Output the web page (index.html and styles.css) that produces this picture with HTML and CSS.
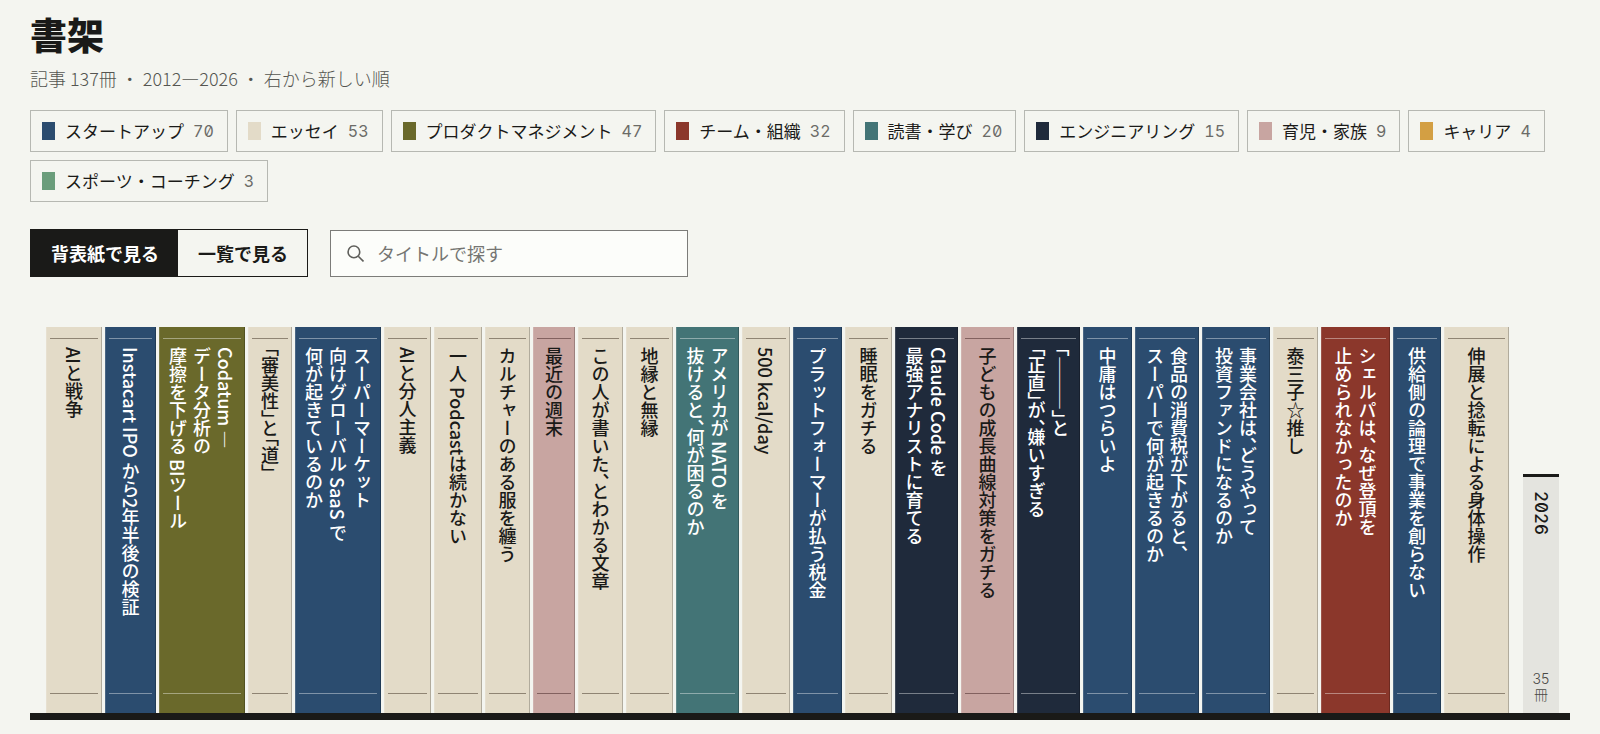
FILE: index.html
```html
<!DOCTYPE html>
<html lang="ja">
<head>
<meta charset="utf-8">
<meta name="viewport" content="width=device-width, initial-scale=1">
<title>書架</title>
<link rel="stylesheet" href="styles.css">
</head>
<body>
<main class="page">
  <header class="head">
    <h1 class="title">書架</h1>
    <p class="summary">記事 137冊 ・ 2012—2026 ・ 右から新しい順</p>
  </header>

  <div class="filters">
    <button type="button" class="chip startup"><i class="swatch"></i><span class="name">スタートアップ</span><span class="count">70</span></button>
    <button type="button" class="chip essay"><i class="swatch"></i><span class="name">エッセイ</span><span class="count">53</span></button>
    <button type="button" class="chip product"><i class="swatch"></i><span class="name">プロダクトマネジメント</span><span class="count">47</span></button>
    <button type="button" class="chip team"><i class="swatch"></i><span class="name">チーム・組織</span><span class="count">32</span></button>
    <button type="button" class="chip reading"><i class="swatch"></i><span class="name">読書・学び</span><span class="count">20</span></button>
    <button type="button" class="chip engineering"><i class="swatch"></i><span class="name">エンジニアリング</span><span class="count">15</span></button>
    <button type="button" class="chip family"><i class="swatch"></i><span class="name">育児・家族</span><span class="count">9</span></button>
    <button type="button" class="chip career"><i class="swatch"></i><span class="name">キャリア</span><span class="count">4</span></button>
    <button type="button" class="chip sports"><i class="swatch"></i><span class="name">スポーツ・コーチング</span><span class="count">3</span></button>
  </div>

  <div class="controls">
    <div class="toggle">
      <button type="button" class="view active" aria-pressed="true">背表紙で見る</button>
      <button type="button" class="view" aria-pressed="false">一覧で見る</button>
    </div>
    <label class="search">
      <svg class="search-icon" viewBox="0 0 16 16" aria-hidden="true"><circle cx="6.5" cy="6.5" r="5.5"/><path d="M10.6 10.6 15.5 15.5"/></svg>
      <input class="search-input" type="search" placeholder="タイトルで探す" aria-label="タイトルで探す">
    </label>
  </div>

  <section class="shelf">
    <div class="year"><span class="year-name">2026</span><span class="year-count"><span class="year-number">35</span><span>冊</span></span></div>
    <a href="#" class="book essay" style="width:65px"><span class="spine">伸展と捻転による身体操作</span></a>
    <a href="#" class="book startup" style="width:48px"><span class="spine">供給側の論理で事業を創らない</span></a>
    <a href="#" class="book team" style="width:69px"><span class="spine">シェルパは、なぜ登頂を<br>止められなかったのか</span></a>
    <a href="#" class="book essay" style="width:45px"><span class="spine">泰三子☆推し</span></a>
    <a href="#" class="book startup" style="width:68px"><span class="spine">事業会社は、どうやって<br>投資ファンドになるのか</span></a>
    <a href="#" class="book startup" style="width:64px"><span class="spine">食品の消費税が下がると、<br>スーパーで何が起きるのか</span></a>
    <a href="#" class="book startup" style="width:49px"><span class="spine">中庸はつらいよ</span></a>
    <a href="#" class="book engineering" style="width:63px"><span class="spine">「―――」と<br>「正直」が、嫌いすぎる</span></a>
    <a href="#" class="book family" style="width:53px"><span class="spine">子どもの成長曲線対策をガチる</span></a>
    <a href="#" class="book engineering" style="width:63px"><span class="spine">Claude Code を<br>最強アナリストに育てる</span></a>
    <a href="#" class="book essay" style="width:47px"><span class="spine">睡眠をガチる</span></a>
    <a href="#" class="book startup" style="width:49px"><span class="spine">プラットフォーマーが払う税金</span></a>
    <a href="#" class="book essay" style="width:48px"><span class="spine">500 kcal/day</span></a>
    <a href="#" class="book reading" style="width:63px"><span class="spine">アメリカが NATO を<br>抜けると、何が困るのか</span></a>
    <a href="#" class="book essay" style="width:47px"><span class="spine">地縁と無縁</span></a>
    <a href="#" class="book essay" style="width:45px"><span class="spine">この人が書いた、とわかる文章</span></a>
    <a href="#" class="book family" style="width:42px"><span class="spine">最近の週末</span></a>
    <a href="#" class="book essay" style="width:45px"><span class="spine">カルチャーのある服を纏う</span></a>
    <a href="#" class="book essay" style="width:48px"><span class="spine">一人 Podcastは続かない</span></a>
    <a href="#" class="book essay" style="width:47px"><span class="spine">AIと分人主義</span></a>
    <a href="#" class="book startup" style="width:86px"><span class="spine">スーパーマーケット<br>向けグローバル SaaS で<br>何が起きているのか</span></a>
    <a href="#" class="book essay" style="width:44px"><span class="spine">「審美性」と「道」</span></a>
    <a href="#" class="book product" style="width:86px"><span class="spine">Codatum —<br>データ分析の<br>摩擦を下げる BIツール</span></a>
    <a href="#" class="book startup" style="width:51px"><span class="spine">Instacart IPO から2年半後の検証</span></a>
    <a href="#" class="book essay" style="width:56px"><span class="spine">AIと戦争</span></a>
  </section>
</main>
</body>
</html>
```
FILE: styles.css
```css
* { box-sizing: border-box; }

body {
  margin: 0;
  background: #f4f5f0;
  color: #1a1a18;
  font-family: "Noto Sans CJK JP", sans-serif;
}

button, input { font: inherit; color: inherit; }

.page { padding: 12px 30px; }

.title {
  margin: 0;
  font-size: 37px;
  line-height: 44px;
  font-weight: 900;
}

.summary {
  margin: 9px 0 19px;
  font-size: 18px;
  line-height: 26px;
  font-weight: 300;
  color: #555551;
}

/* Category colours, shared by chips and books */
.startup { --c: #2b4c6f; --ink: #fff; --rule: rgba(255, 255, 255, .4); }
.essay { --c: #e3dbc8; --ink: #1a1a18; --rule: rgba(60, 45, 30, .5); }
.product { --c: #6a692b; --ink: #fff; --rule: rgba(255, 255, 255, .4); }
.team { --c: #8b372b; --ink: #fff; --rule: rgba(255, 255, 255, .4); }
.reading { --c: #437476; --ink: #fff; --rule: rgba(255, 255, 255, .4); }
.engineering { --c: #1f2a3b; --ink: #fff; --rule: rgba(255, 255, 255, .4); }
.family { --c: #c8a5a1; --ink: #1a1a18; --rule: rgba(60, 30, 30, .5); }
.career { --c: #d39f43; }
.sports { --c: #6a9d7b; }

.filters {
  display: flex;
  flex-wrap: wrap;
  gap: 8px;
}

.chip {
  display: flex;
  align-items: center;
  padding: 7px 13px 7px 11px;
  border: 1px solid #b6b8b2;
  background: none;
  font-size: 17px;
  line-height: 26px;
}

.swatch {
  width: 13px;
  height: 18px;
  background: var(--c);
}

.name { margin: 0 9px 0 10px; }

.count {
  font-family: "Inter", sans-serif;
  font-size: 16px;
  font-feature-settings: "zero", "tnum";
  color: #6b6b67;
}

.controls {
  display: flex;
  align-items: flex-end;
  gap: 22px;
  margin: 27px 0 50px;
}

.toggle {
  display: flex;
  border: 1px solid #1a1a18;
}

.view {
  padding: 10px 19px 10px 20px;
  border: 0;
  background: none;
  font-size: 18px;
  line-height: 26px;
  font-weight: 700;
}

.view.active {
  background: #1a1a18;
  color: #fff;
}

.search {
  display: flex;
  align-items: center;
  gap: 13px;
  width: 358px;
  padding: 0 16px;
  border: 1px solid #7c7c79;
  background: #fcfdfa;
}

.search-icon {
  flex: none;
  width: 17px;
  height: 17px;
  fill: none;
  stroke: #5f5f5b;
  stroke-width: 1.5;
}

.search-input {
  flex: 1;
  min-width: 0;
  padding: 9px 0;
  border: 0;
  outline: 0;
  background: none;
  font-size: 18px;
  line-height: 27px;
}

.search-input::placeholder { color: #757572; opacity: 1; }

.shelf {
  display: flex;
  flex-direction: row-reverse;
  align-items: flex-end;
  gap: 3px;
  padding: 0 11px;
  border-bottom: 7px solid #1a1a18;
}

.book {
  flex: none;
  display: flex;
  flex-direction: column;
  align-items: center;
  height: 386px;
  padding: 11px 4px 19px;
  background: var(--c);
  box-shadow: inset 1px 0 rgba(255, 255, 255, .15), inset -1px 0 rgba(0, 0, 0, .22);
  color: var(--ink);
  text-decoration: none;
}

.book::before, .book::after {
  content: "";
  width: 100%;
  height: 1px;
  background: var(--rule);
}

.spine {
  flex: 1;
  padding-top: 8px;
  writing-mode: vertical-rl;
  font-size: 18px;
  line-height: 24px;
  font-weight: 500;
  font-feature-settings: "vhal";
  white-space: nowrap;
}

.year {
  display: flex;
  flex-direction: column;
  justify-content: space-between;
  align-items: center;
  width: 36px;
  height: 239px;
  margin-left: 11px;
  padding: 14px 0 11px;
  border-top: 3px solid #1a1a18;
  background: #e4e4df;
}

.year-name {
  writing-mode: vertical-rl;
  font-family: "Inter", sans-serif;
  font-size: 17px;
  line-height: 20px;
  font-weight: 500;
  font-feature-settings: "zero", "tnum";
}

.year-count {
  display: flex;
  flex-direction: column;
  align-items: center;
  font-size: 14px;
  line-height: 16px;
  font-weight: 300;
  color: #4a4a46;
}

.year-number {
  font-family: "Inter", sans-serif;
  line-height: 14px;
}
```
